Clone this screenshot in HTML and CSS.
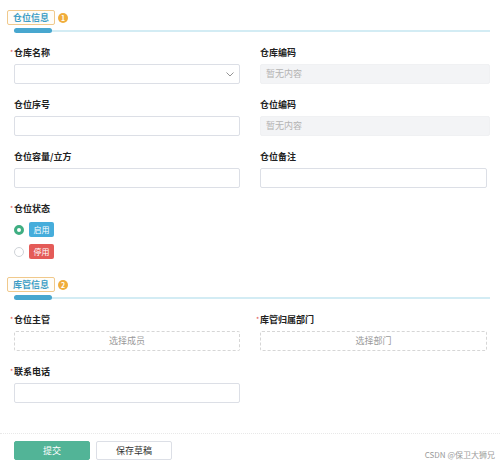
FILE: index.html
```html
<!DOCTYPE html>
<html>
<head>
<meta charset="utf-8">
<link rel="stylesheet" href="styles.css">
</head>
<body>
<div class="page">
  <div class="section-head">
    <div class="title-row"><span class="title-box">仓位信息</span><span class="num">1</span></div>
    <div class="bar"><span class="bar-thick"></span></div>
  </div>
  <div class="grid">
    <div class="item">
      <div class="label req">仓库名称</div>
      <div class="input select"><svg width="8" height="5" viewBox="0 0 8 5"><polyline points="0.5,0.5 4,4 7.5,0.5" fill="none" stroke="#888" stroke-width="0.9"/></svg></div>
    </div>
    <div class="item">
      <div class="label">仓库编码</div>
      <div class="input disabled">暂无内容</div>
    </div>
    <div class="item">
      <div class="label">仓位序号</div>
      <div class="input"></div>
    </div>
    <div class="item">
      <div class="label">仓位编码</div>
      <div class="input disabled">暂无内容</div>
    </div>
    <div class="item">
      <div class="label">仓位容量/立方</div>
      <div class="input"></div>
    </div>
    <div class="item">
      <div class="label">仓位备注</div>
      <div class="input narrow"></div>
    </div>
    <div class="item">
      <div class="label req status-label">仓位状态</div>
      <div class="radios">
        <div class="radio-row"><span class="radio checked"></span><span class="tag blue">启用</span></div>
        <div class="radio-row"><span class="radio"></span><span class="tag red">停用</span></div>
      </div>
    </div>
  </div>

  <div class="section-head second">
    <div class="title-row"><span class="title-box">库管信息</span><span class="num">2</span></div>
    <div class="bar"><span class="bar-thick"></span></div>
  </div>
  <div class="grid">
    <div class="item">
      <div class="label req">仓位主管</div>
      <div class="input dashed">选择成员</div>
    </div>
    <div class="item">
      <div class="label req">库管归属部门</div>
      <div class="input dashed narrow">选择部门</div>
    </div>
    <div class="item">
      <div class="label req">联系电话</div>
      <div class="input"></div>
    </div>
  </div>
</div>
<div class="footer">
  <div class="buttons">
    <span class="btn primary">提交</span>
    <span class="btn">保存草稿</span>
  </div>
  <span class="watermark">CSDN @保卫大狮兄</span>
</div>
</body>
</html>
```
FILE: styles.css
```css
* { box-sizing: border-box; }
html, body { margin: 0; padding: 0; background: #fff; }
body {
  width: 500px;
  height: 463px;
  font-family: "Noto Sans CJK SC", "Noto Sans", sans-serif;
  color: #222;
  overflow: hidden;
}
.page {
  padding: 10px 10px 0 14px;
  height: 433px;
}
.section-head.second { margin-top: 18px; }
.title-row {
  display: flex;
  align-items: center;
  height: 15px;
  margin-left: -7px;
}
.title-box {
  display: inline-block;
  height: 15px;
  width: 48px;
  border: 1px solid #f0c98c;
  border-radius: 2px;
  color: #3e9dc6;
  font-size: 9px;
  font-weight: 600;
  line-height: 13px;
  text-align: center;
  background: #fffdf9;
}
.num {
  display: inline-block;
  width: 10px;
  height: 10px;
  margin-left: 3px;
  border-radius: 50%;
  background: #f0ad3c;
  color: #fff;
  font-size: 7px;
  font-weight: 700;
  line-height: 10px;
  text-align: center;
}
.bar {
  margin-top: 3px;
  height: 5px;
  display: flex;
  align-items: center;
  background: linear-gradient(#d3ecf4, #d3ecf4) center / 100% 2px no-repeat;
}
.bar-thick {
  width: 38px;
  height: 5px;
  border-radius: 3px 3px 3px 3px;
  background: #48a7cf;
}
.grid {
  margin-top: 14px;
  display: grid;
  grid-template-columns: 226px 230px;
  column-gap: 20px;
  row-gap: 15px;
  align-items: start;
}
.label {
  height: 12px;
  line-height: 12px;
  font-size: 9px;
  font-weight: 700;
  color: #222;
  margin-bottom: 5px;
  white-space: nowrap;
}
.req::before {
  content: "*";
  color: #e0564f;
  font-size: 7px;
  font-weight: 400;
  display: inline-block;
  width: 4px;
  margin-left: -4px;
  vertical-align: top;
  line-height: 10px;
}
.input {
  height: 20px;
  border: 1px solid #dcdfe6;
  border-radius: 2px;
  background: #fff;
  font-size: 9px;
  line-height: 18px;
}
.input.narrow { width: 227px; }
.select {
  display: flex;
  align-items: center;
  justify-content: flex-end;
  padding-right: 5px;
}
.disabled {
  background: #f3f4f6;
  border-color: #f0f1f3;
  color: #b3b3b3;
  padding-left: 5px;
}
.dashed {
  border: 1px dashed #d6d6d6;
  color: #9a9a9a;
  text-align: center;
}
.status-label { margin-bottom: 7px; }
.radios {
  display: flex;
  flex-direction: column;
  gap: 7px;
}
.radio-row {
  display: flex;
  align-items: center;
  height: 15px;
}
.radio {
  width: 10px;
  height: 10px;
  border-radius: 50%;
  border: 1px solid #cfd3d8;
  background: #fff;
}
.radio.checked {
  border: 3px solid #3fae82;
  background: #fff;
}
.tag {
  margin-left: 5px;
  width: 25px;
  height: 15px;
  border-radius: 2px;
  color: #fff;
  font-size: 8px;
  line-height: 15px;
  text-align: center;
}
.tag.blue { background: #46addb; }
.tag.red { background: #e45b58; }
.footer {
  border-top: 1px dotted #e8e8e8;
  display: flex;
  justify-content: space-between;
  align-items: flex-start;
  padding: 7px 5px 0 14px;
}
.buttons {
  display: flex;
  gap: 6px;
}
.btn {
  width: 76px;
  height: 19px;
  border: 1px solid #dcdfe6;
  border-radius: 2px;
  font-size: 9px;
  line-height: 17px;
  text-align: center;
  color: #333;
  background: #fff;
}
.btn.primary {
  background: #52b497;
  border-color: #52b497;
  color: #fff;
}
.watermark {
  margin-top: 9px;
  font-size: 8px;
  color: #9a9a9a;
  line-height: 10px;
}
```
